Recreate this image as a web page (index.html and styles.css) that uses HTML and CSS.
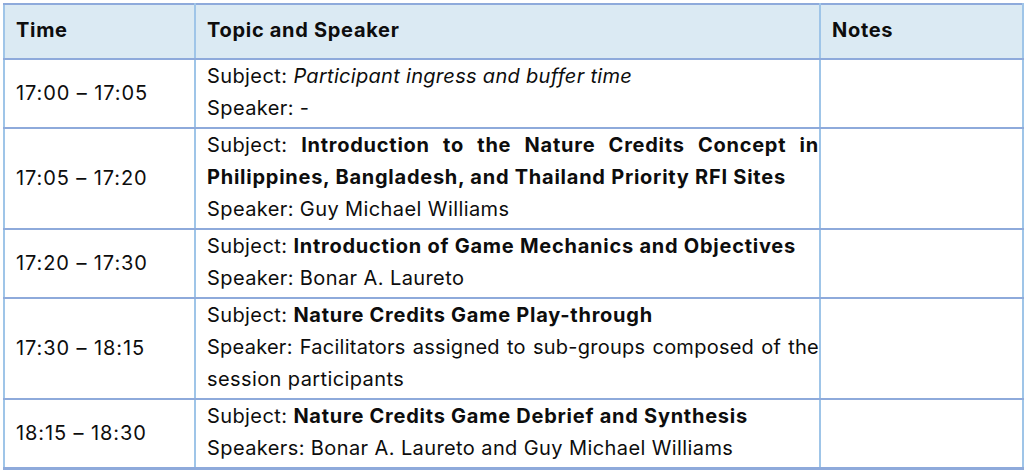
FILE: index.html
```html
<!DOCTYPE html>
<html lang="en">
<head>
<meta charset="utf-8">
<title>Agenda</title>
<link rel="stylesheet" href="styles.css">
</head>
<body>
<table class="agenda">
  <colgroup>
    <col class="c-time">
    <col class="c-topic">
    <col class="c-notes">
  </colgroup>
  <thead>
    <tr class="head">
      <th>Time</th>
      <th>Topic and Speaker</th>
      <th>Notes</th>
    </tr>
  </thead>
  <tbody>
    <tr class="r1">
      <td class="time">17:00 – 17:05</td>
      <td class="topic">Subject: <em>Participant ingress and buffer time</em><br>Speaker: -</td>
      <td></td>
    </tr>
    <tr class="r2">
      <td class="time">17:05 – 17:20</td>
      <td class="topic">Subject: <b>Introduction to the Nature Credits Concept in Philippines, Bangladesh, and Thailand Priority RFI Sites</b><br>Speaker: Guy Michael Williams</td>
      <td></td>
    </tr>
    <tr class="r3">
      <td class="time">17:20 – 17:30</td>
      <td class="topic">Subject: <b>Introduction of Game Mechanics and Objectives</b><br>Speaker: Bonar A. Laureto</td>
      <td></td>
    </tr>
    <tr class="r4">
      <td class="time">17:30 – 18:15</td>
      <td class="topic">Subject: <b>Nature Credits Game Play-through</b><br><span class="tight">Speaker: Facilitators assigned to sub-groups composed of the</span> session participants</td>
      <td></td>
    </tr>
    <tr class="r5">
      <td class="time">18:15 – 18:30</td>
      <td class="topic">Subject: <b>Nature Credits Game Debrief and Synthesis</b><br>Speakers: Bonar A. Laureto and Guy Michael Williams</td>
      <td></td>
    </tr>
  </tbody>
</table>
</body>
</html>
```
FILE: styles.css
```css
html, body {
  margin: 0;
  padding: 0;
  background: #ffffff;
}
body {
  padding: 3px 0 0 3px;
  font-family: "Inter", "Open Sans", sans-serif;
  color: #0d0d0d;
}
.agenda {
  border-collapse: collapse;
  width: 1019px;
  table-layout: fixed;
  font-size: 20px;
  line-height: 32px;
  letter-spacing: 0.4px;
}
.c-time { width: 191px; }
.c-topic { width: 625px; }
.c-notes { width: 203px; }

.agenda th,
.agenda td {
  border-left: 2px solid #9fc5e8;
  border-right: 2px solid #9fc5e8;
  border-top: 2px solid #8eaadb;
  border-bottom: 2px solid #8eaadb;
  padding: 0 0 3px 11px;
  vertical-align: top;
  text-align: left;
}
.head th {
  background: #dbeaf3;
  height: 50px;
  vertical-align: middle;
  font-weight: 700;
  letter-spacing: 0.7px;
  padding-bottom: 3px;
}
.agenda tbody tr:last-child td {
  border-bottom-width: 3px;
}
.agenda td.time {
  vertical-align: middle;
  padding-top: 2px;
  letter-spacing: 0.9px;
}
.agenda td.topic {
  text-align: justify;
}
.topic em { font-style: italic; letter-spacing: 0.3px; }
.topic b { font-weight: 700; letter-spacing: 0.75px; }
.topic .tight { letter-spacing: 0.25px; }
```
